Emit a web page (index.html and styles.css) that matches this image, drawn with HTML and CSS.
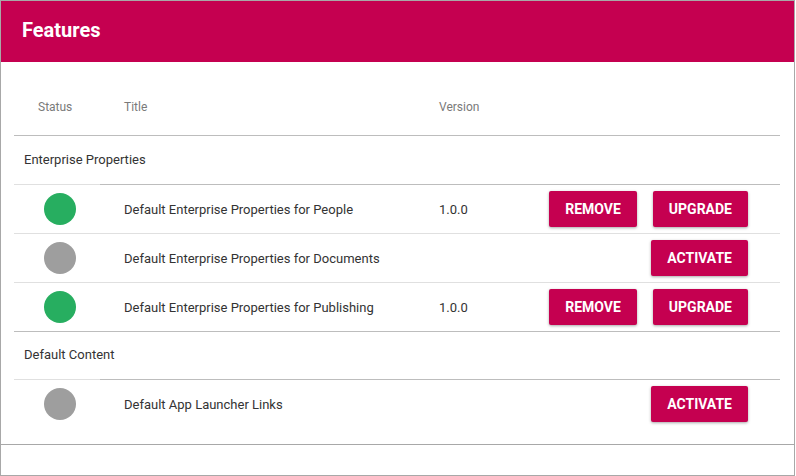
FILE: index.html
```html
<!DOCTYPE html>
<html>
<head>
<meta charset="utf-8">
<link rel="stylesheet" href="styles.css">
</head>
<body>
<div class="frame">
  <header class="top">Features</header>
  <div class="table">
    <div class="thead">
      <div class="c-status">Status</div>
      <div class="c-title">Title</div>
      <div class="c-version">Version</div>
    </div>
    <div class="group">Enterprise Properties</div>
    <div class="row">
      <div class="c-status"><span class="dot on"></span></div>
      <div class="c-title">Default Enterprise Properties for People</div>
      <div class="c-version">1.0.0</div>
      <div class="c-actions"><button class="btn">Remove</button><button class="btn">Upgrade</button></div>
    </div>
    <div class="row">
      <div class="c-status"><span class="dot off"></span></div>
      <div class="c-title">Default Enterprise Properties for Documents</div>
      <div class="c-version"></div>
      <div class="c-actions"><button class="btn">Activate</button></div>
    </div>
    <div class="row">
      <div class="c-status"><span class="dot on"></span></div>
      <div class="c-title">Default Enterprise Properties for Publishing</div>
      <div class="c-version">1.0.0</div>
      <div class="c-actions"><button class="btn">Remove</button><button class="btn">Upgrade</button></div>
    </div>
    <div class="group g2">Default Content</div>
    <div class="row">
      <div class="c-status"><span class="dot off"></span></div>
      <div class="c-title">Default App Launcher Links</div>
      <div class="c-version"></div>
      <div class="c-actions"><button class="btn">Activate</button></div>
    </div>
  </div>
  <div class="footer"></div>
</div>
</body>
</html>
```

FILE: styles.css
```css
* { box-sizing: border-box; }
html, body { margin: 0; padding: 0; background: #fff; }
body { font-family: Roboto, "Noto Sans", sans-serif; }
.frame {
  width: 795px;
  height: 476px;
  border: 1px solid #a8a8a8;
  display: flex;
  flex-direction: column;
  background: #fff;
}
.top {
  height: 61px;
  flex: none;
  background: #c50050;
  color: #fff;
  font-weight: 700;
  font-size: 20px;
  line-height: 59px;
  padding-left: 21px;
}
.table {
  margin: 17px 14px 0 13px;
}
.thead, .row {
  display: flex;
  align-items: center;
}
.thead {
  height: 56px;
  font-size: 12px;
  color: #7a7a7a;
}
.c-status { width: 86px; flex: none; }
.thead .c-status { padding-left: 24px; }
.c-title { width: 339px; flex: none; padding-left: 24px; }
.c-version { width: 110px; flex: none; }
.c-actions {
  flex: 1;
  display: flex;
  justify-content: flex-end;
  gap: 16px;
  padding-right: 32px;
}
.group {
  height: 49px;
  border-top: 1px solid #bdbdbd;
  font-size: 13px;
  color: #333;
  padding-left: 10px;
  padding-bottom: 2px;
  display: flex;
  align-items: center;
}
.group.g2 { height: 48px; }
.row {
  height: 49px;
  font-size: 13px;
  color: #333;
}
.row > div {
  height: 100%;
  display: flex;
  align-items: center;
  border-top: 1px solid #bdbdbd;
}
.group + .row > .c-status { border-top-color: #e0e0e0; }
.row + .row > div { border-top-color: #e0e0e0; }
.row > .c-status { padding-left: 30px; }
.dot {
  width: 32px;
  height: 32px;
  border-radius: 50%;
  display: block;
}
.dot.on { background: #27ae60; }
.dot.off { background: #9e9e9e; }
.btn {
  height: 36px;
  border: 0;
  border-radius: 2px;
  background: #c50050;
  color: #fff;
  font-family: Roboto, sans-serif;
  font-weight: 700;
  font-size: 14px;
  text-transform: uppercase;
  padding: 0 16px;
  box-shadow: 0 1px 3px rgba(0,0,0,0.35);
}
.footer {
  margin-top: auto;
  height: 31px;
  border-top: 1px solid #a8a8a8;
}
```
